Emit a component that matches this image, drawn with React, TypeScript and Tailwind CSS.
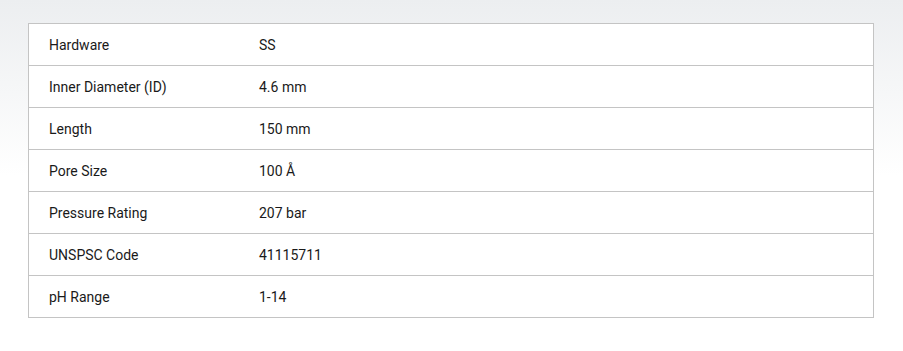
const rows: [string, string][] = [
  ['Hardware', 'SS'],
  ['Inner Diameter (ID)', '4.6 mm'],
  ['Length', '150 mm'],
  ['Pore Size', '100 Å'],
  ['Pressure Rating', '207 bar'],
  ['UNSPSC Code', '41115711'],
  ['pH Range', '1-14'],
];

export default function App() {
  return (
    <div
      className="w-[903px] h-[351px] bg-gradient-to-b from-[#eceef0] via-white to-white pt-[23px] pl-[28px] pr-[29px]"
      style={{ fontFamily: 'Roboto, "Liberation Sans", sans-serif' }}
    >
      <div className="border border-[#c4c4c4] bg-white">
        {rows.map(([label, value], i) => (
          <div
            key={label}
            className={`flex items-center h-[41px] pt-[2px] text-[14px] text-[#1a1a1a] ${
              i > 0 ? 'border-t border-[#c4c4c4] h-[42px]' : ''
            }`}
          >
            <div className="w-[230px] pl-[20px]">{label}</div>
            <div>{value}</div>
          </div>
        ))}
      </div>
    </div>
  );
}
